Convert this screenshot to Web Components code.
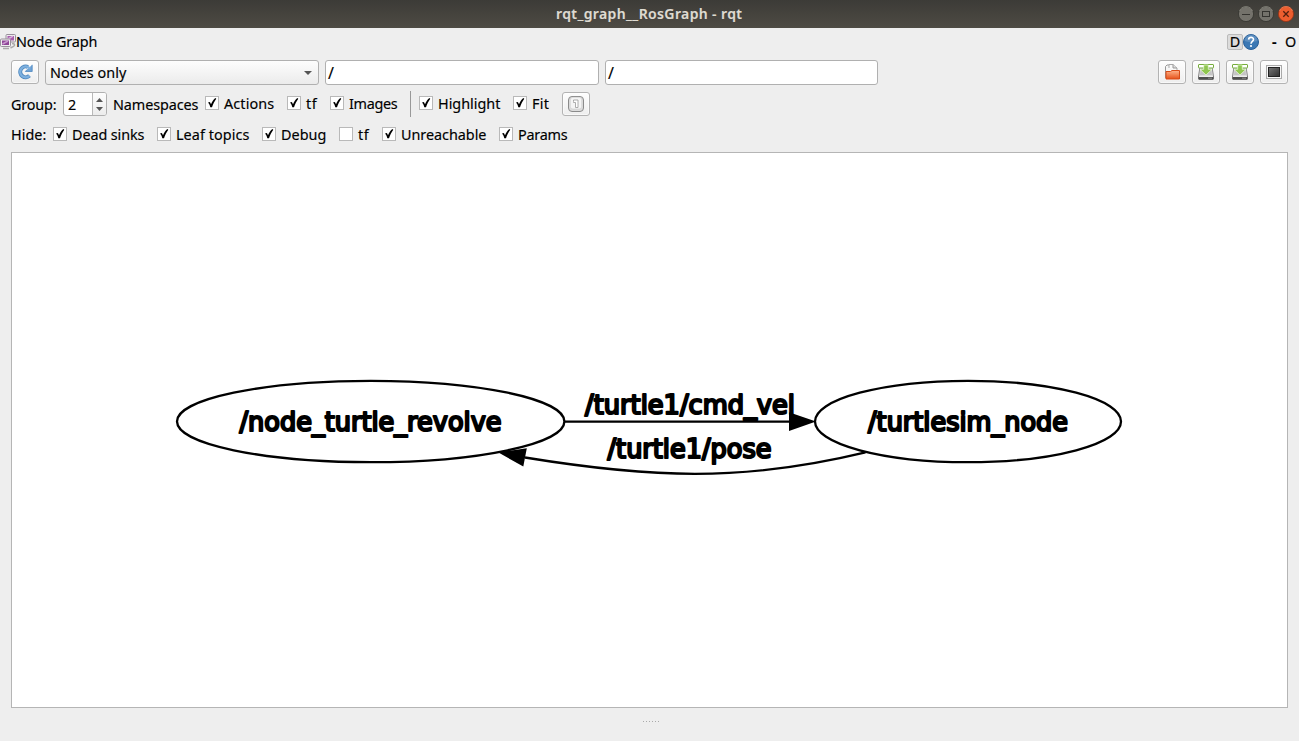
<!DOCTYPE html>
<html lang="en">
<head>
<meta charset="utf-8">
<title>rqt_graph__RosGraph - rqt</title>
<style>
html,body{margin:0;height:100%;overflow:hidden;background:#eee}
body{font:14.4px/18px "Noto Sans","Open Sans",sans-serif;color:#000;-webkit-text-stroke:.15px}
</style>
</head>
<body>
<rqt-window></rqt-window>
<script>
const define = (name, html, setup) => customElements.define(name, class extends HTMLElement {
  connectedCallback() {
    if (this.shadowRoot) return;
    const t = document.createElement('template');
    t.innerHTML = html;
    this.attachShadow({mode: 'open'}).appendChild(t.content.cloneNode(true));
    if (setup) setup(this, this.shadowRoot);
  }
});

/* Text label whose letter spacing is adjusted to fill the width in its "w" attribute */
define('ui-label', `<style>
  :host{display:block;flex:none;white-space:pre}
  span{display:inline-block}
</style><span><slot></slot></span>`, (el, root) => {
  const w = +el.getAttribute('w');
  if (!w) return;
  el.style.width = w + 'px';
  const s = root.querySelector('span');
  const n = el.textContent.length;
  s.style.letterSpacing = ((w - .6 - s.getBoundingClientRect().width) / n) + 'px';
});

define('ui-check', `<style>
  :host{display:flex;flex:none;align-items:center;height:18px}
  i{box-sizing:border-box;width:14px;height:14px;border:1px solid #b9b9b9;background:#fff;margin-right:5px;flex:none}
  svg{display:none;width:12px;height:12px}
  :host([on]) svg{display:block}
  ::slotted(*){padding-top:2px}
</style><i><svg viewBox="0 0 12 12"><path d="M2 5.500 3.900 4.900 5 7.300C6 4.800 7.500 2.600 9.300 1.100L10.300 1.700C8.500 4.300 7 7 6 10.200H4.300C3.800 8.200 3.200 6.700 2 5.500Z"/></svg></i><slot></slot>`);

define('ui-button', `<style>
  :host{display:flex;box-sizing:border-box;flex:none;width:28px;height:24px;border:1px solid #b3b3b3;border-radius:3px;
    background:linear-gradient(#fefefe,#eeeeee);align-items:center;justify-content:center;box-shadow:inset 0 0 0 1px #fff8}
</style><slot></slot>`);

define('ui-icon', `<style>:host{display:block;flex:none;width:16px;height:16px}svg{display:block;width:16px;height:16px}</style><div></div>`, (el, root) => {
  const icons = {
    graph: `<rect x="6" y=".5" width="9.500" height="7.500" rx="1" fill="#eee" stroke="#99909c"/><rect x="7.500" y="2" width="6.500" height="4.500" fill="#a85cae"/><path d="M8 5 13 2.200" stroke="#d7b2db" stroke-width="1.500"/>
      <path d="M12 9.500c3 0 3.300 1.500 1.500 3l-3 1.500" fill="none" stroke="#aaa" stroke-width="1.400"/>
      <rect x=".5" y="5" width="10" height="7.500" rx="1" fill="#eee" stroke="#99909c"/><rect x="2" y="6.500" width="7" height="4.500" fill="#8e4697"/><path d="M2.500 10 8 7" stroke="#c898ce" stroke-width="1.500"/><path d="M3 14.500h6" stroke="#aaa" stroke-width="1.500"/>`,
    refresh: `<path d="M12.500 11.700A5.400 5.400 0 1 1 11 3" fill="none" stroke="#4f88bf" stroke-width="4"/><path d="M15.200.8V7.500H8.300L10.200 5.500" fill="#6ea3d6" stroke="#4f88bf" stroke-width=".8"/><path d="M12.300 11.900A5.400 5.400 0 1 1 10.800 3L13 4.500" fill="none" stroke="#7db0df" stroke-width="2.400"/>`,
    folder: `<path d="M1.500 14V2.500L3 1h5l4.500 4v7" fill="#f6f6f6" stroke="#999"/><path d="M5 4V.5h4L13 4v4" fill="#fafafa" stroke="#aaa"/><path d="M9 .5V4h4" fill="#ddd" stroke="#999"/><path d="M2 7.500h4.500L8 6.500h7.500V15H2Z" fill="url(#o)" stroke="#d84b16"/><defs><linearGradient id="o" x2="0" y2="1"><stop stop-color="#ffb28c"/><stop offset=".3" stop-color="#f79668"/><stop offset="1" stop-color="#e6521b"/></linearGradient></defs>`,
    save: `<path d="M2 3h12l1.500 9v3H.5v-3Z" fill="#ddd" stroke="#8d8d8d"/><path d="M3 4h10l1 7H2Z" fill="#c4c4c4"/><rect x=".5" y=".5" width="15" height="3.500" rx=".5" fill="#fff" stroke="#77ad3d"/><path d="M5.700 1h4.600v4.300H14L8 11 2 5.300h3.700Z" fill="#8fc650" stroke="#efffe0" stroke-width=".7"/><path d="M.5 12.500h15V15q0 .7-.7.7H1.200q-.7 0-.7-.7Z" fill="#4e4e4e"/><path d="M1 12.500h14" stroke="#ededed"/><path d="M10 14.200h4" stroke="#888"/>`,
    screen: `<rect x=".5" y="1.500" width="15" height="13" fill="#f7f7f7" stroke="#aaa"/><rect x="2.500" y="3.500" width="11" height="9" fill="url(#k)" stroke="#222"/><defs><linearGradient id="k" x2="1" y2="1"><stop stop-color="#777"/><stop offset="1" stop-color="#303030"/></linearGradient></defs>`,
    key: `<rect x=".5" y=".5" width="15" height="15" rx="3.500" fill="#dcdcdc" stroke="#8b8b8b"/><rect x="2.300" y="1.300" width="11.400" height="11.700" rx="2.500" fill="#f5f5f5" stroke="#ccc" stroke-width=".6"/><path d="M5.500 5.500V4H10v7.500H7.500V6.500h-2Z" fill="#fff" stroke="#999" stroke-width=".8"/>`,
    help: `<circle cx="8" cy="8" r="7.500" fill="#3b78b4" stroke="#285f99"/><path d="M1.500 7a6.500 6.500 0 0 1 13 0Q8 9 1.500 7" fill="#fff" opacity=".17"/><path d="M5.600 5.600C5.700 2.600 10.500 2.700 10.500 5.400 10.500 7.300 8 7.300 8 9.700" fill="none" stroke="#fff" stroke-width="1.600"/><circle cx="8" cy="12" r="1.100" fill="#fff"/>`
  };
  root.querySelector('div').innerHTML = `<svg viewBox="0 0 16 16">${icons[el.getAttribute('name')]}</svg>`;
});

define('title-bar', `<style>
  :host{display:grid;grid-template-columns:1fr auto 1fr;align-items:center;height:28px;background:linear-gradient(#3c3b37,#4e4b44);color:#dfdbd2;font-weight:600;font-size:14px}
  .b{grid-column:3;display:flex;justify-content:flex-end;gap:4px;padding-right:5px}
  ui-label{grid-column:2}
  svg{width:16px;height:16px;display:block}
</style><ui-label w="187">rqt_graph__RosGraph - rqt</ui-label>
<div class="b">
<svg viewBox="0 0 16 16"><circle cx="8" cy="8" r="7.600" fill="#74726b" stroke="#34332f" stroke-width=".8"/><path d="M1.500 5a7 7 0 0 1 13 0" fill="none" stroke="#8d8b83" stroke-width=".8"/><path d="M4 8.500h8" stroke="#34332f"/></svg>
<svg viewBox="0 0 16 16"><circle cx="8" cy="8" r="7.600" fill="#74726b" stroke="#34332f" stroke-width=".8"/><path d="M1.500 5a7 7 0 0 1 13 0" fill="none" stroke="#8d8b83" stroke-width=".8"/><rect x="4.500" y="5.500" width="7" height="5" fill="none" stroke="#34332f"/></svg>
<svg viewBox="0 0 16 16"><circle cx="8" cy="8" r="7.600" fill="#ec5e2f" stroke="#9d3213" stroke-width=".8"/><path d="M1.500 5a7 7 0 0 1 13 0" fill="none" stroke="#f58a62" stroke-width=".8"/><path d="m5.300 5.300 5.400 5.400m0-5.400-5.400 5.400" stroke="#51200f" stroke-width="1.300"/></svg>
</div>`);

define('dock-title', `<style>
  :host{display:flex;align-items:center;height:27px}
  .d{box-sizing:border-box;width:16px;height:16px;border:1px solid #bbb;border-radius:2px;background:#dcdcdc;margin-left:auto;display:grid;place-items:center;line-height:14px}
  .m{margin-left:13px;font-weight:700}.o{margin-left:7px}
</style><ui-icon name="graph"></ui-icon><ui-label w="82">Node Graph</ui-label>
<div class="d">D</div><ui-icon name="help"></ui-icon><ui-label class="m" w="6">-</ui-label><ui-label class="o" w="14">O</ui-label>`);

define('ui-combo', `<style>
  :host{display:flex;box-sizing:border-box;flex:none;width:274px;height:25px;border:1px solid #b0b0b0;border-radius:3px;background:linear-gradient(#fdfdfd,#ebebeb);align-items:center;justify-content:space-between;padding:0 6px 0 4px}
  svg{width:8px;height:4px}
</style><slot></slot><svg viewBox="0 0 8 4"><path d="M0 0h8L4 4Z" fill="#555"/></svg>`);

define('ui-input', `<style>
  :host{display:flex;box-sizing:border-box;flex:none;height:25px;border:1px solid #b0b0b0;border-radius:3px;background:#fff;align-items:center;padding-left:2px;font-size:16px}
</style><slot></slot>`);

define('ui-spin', `<style>
  :host{display:flex;box-sizing:border-box;flex:none;width:44px;height:24px;border:1px solid #b0b0b0;border-radius:3px;background:#fff;align-items:center;overflow:hidden}
  b{font-weight:400;flex:1;padding:1px 0 0 4px}
  div{box-sizing:border-box;width:14px;height:22px;border-left:1px solid #b9b9b9;background:linear-gradient(#fdfdfd,#ececec);display:flex;flex-direction:column;align-items:center;justify-content:space-between;padding:5px 0 4px}
  svg{width:7px;height:4px;display:block}
</style><b><slot></slot></b><div><svg viewBox="0 0 7 4"><path d="M0 4h7L3.500 0Z" fill="#555"/></svg><svg viewBox="0 0 7 4"><path d="M0 0h7L3.500 4Z" fill="#555"/></svg></div>`);

define('tool-rows', `<style>
  :host{display:block;padding:5px 11px 0}
  .r{display:flex}
  .r1{gap:6px;height:32px}
  .r2{height:24px;align-items:center}
  .r3{height:18px;align-items:center;margin-top:9px}
  .r2>ui-label,.r3>ui-label{padding-top:2px}
  .push{margin-left:auto}
  .up{margin-top:-2px}
  .sep{width:1px;height:26px;background:#999;margin-left:12px}
</style>
<div class="r r1"><ui-button><ui-icon name="refresh"></ui-icon></ui-button><ui-combo><ui-label w="77">Nodes only</ui-label></ui-combo>
<ui-input style="width:274px">/</ui-input><ui-input style="width:273px">/</ui-input>
<ui-button class="push"><ui-icon name="folder"></ui-icon></ui-button><ui-button><ui-icon name="save"></ui-icon></ui-button><ui-button><ui-icon name="save"></ui-icon></ui-button><ui-button><ui-icon name="screen"></ui-icon></ui-button></div>
<div class="r r2"><ui-label w="46">Group:</ui-label><ui-spin style="margin-left:6px">2</ui-spin><ui-label w="86" style="margin-left:6px">Namespaces</ui-label>
<ui-check on class="up" style="margin-left:6px"><ui-label w="51">Actions</ui-label></ui-check>
<ui-check on class="up" style="margin-left:12px"><ui-label w="12">tf</ui-label></ui-check>
<ui-check on class="up" style="margin-left:12px"><ui-label w="49">Images</ui-label></ui-check>
<div class="sep"></div>
<ui-check on class="up" style="margin-left:8px"><ui-label w="63">Highlight</ui-label></ui-check>
<ui-check on class="up" style="margin-left:12px"><ui-label w="18">Fit</ui-label></ui-check>
<ui-button style="margin-left:12px"><ui-icon name="key"></ui-icon></ui-button></div>
<div class="r r3"><ui-label w="36">Hide:</ui-label>
<ui-check on style="margin-left:6px"><ui-label w="73">Dead sinks</ui-label></ui-check>
<ui-check on style="margin-left:12px"><ui-label w="74">Leaf topics</ui-label></ui-check>
<ui-check on style="margin-left:12px"><ui-label w="46">Debug</ui-label></ui-check>
<ui-check style="margin-left:12px"><ui-label w="12">tf</ui-label></ui-check>
<ui-check on style="margin-left:12px"><ui-label w="86">Unreachable</ui-label></ui-check>
<ui-check on style="margin-left:12px"><ui-label w="50">Params</ui-label></ui-check></div>`);

define('ros-graph', `<style>
  :host{display:block;box-sizing:border-box;flex:1;margin:0 11px;border:1px solid #b5b5b5;background:#fff;min-height:0}
  svg{display:block;width:1275px;height:554px}
  text{font:26px "DejaVu Sans",sans-serif;stroke:#000;stroke-width:2.200px;-webkit-text-stroke:2.200px #000;stroke-linejoin:round}
  .l{fill:none;stroke:#000;stroke-width:2.300}
</style><svg viewBox="12 153 1275 554">
<ellipse class="l" cx="370.700" cy="421.500" rx="193.700" ry="40.700"/>
<ellipse class="l" cx="968" cy="421.500" rx="153" ry="40.700"/>
<path class="l" d="M565 421.600H792M865.500 452.300C815 464.500 755 473.800 695 473.800C640 473.800 580 466.500 525 457.500"/>
<path d="M789 412.200 816 421.600 789 431ZM498 452.300 526.800 448.200 523.300 466.500Z"/>
<text x="239.500" y="431" textLength="262" lengthAdjust="spacingAndGlyphs">/node_turtle_revolve</text>
<text x="868" y="431" textLength="200" lengthAdjust="spacingAndGlyphs">/turtlesim_node</text>
<text x="585" y="413.500" textLength="210" lengthAdjust="spacingAndGlyphs">/turtle1/cmd_vel</text>
<text x="607.500" y="457.500" textLength="164" lengthAdjust="spacingAndGlyphs">/turtle1/pose</text>
</svg>`);

define('rqt-window', `<style>
  :host{display:flex;flex-direction:column;height:741px;width:1299px;background:#eee;overflow:hidden}
  tool-rows{height:92px}
  footer{height:33px;display:flex;justify-content:center;gap:2px;padding-top:13px;box-sizing:border-box;padding-left:3px}
  footer i{width:1px;height:1px;background:#aaa}
</style><title-bar></title-bar><dock-title></dock-title><tool-rows></tool-rows><ros-graph></ros-graph>
<footer><i></i><i></i><i></i><i></i><i></i><i></i></footer>`);
</script>
</body>
</html>
